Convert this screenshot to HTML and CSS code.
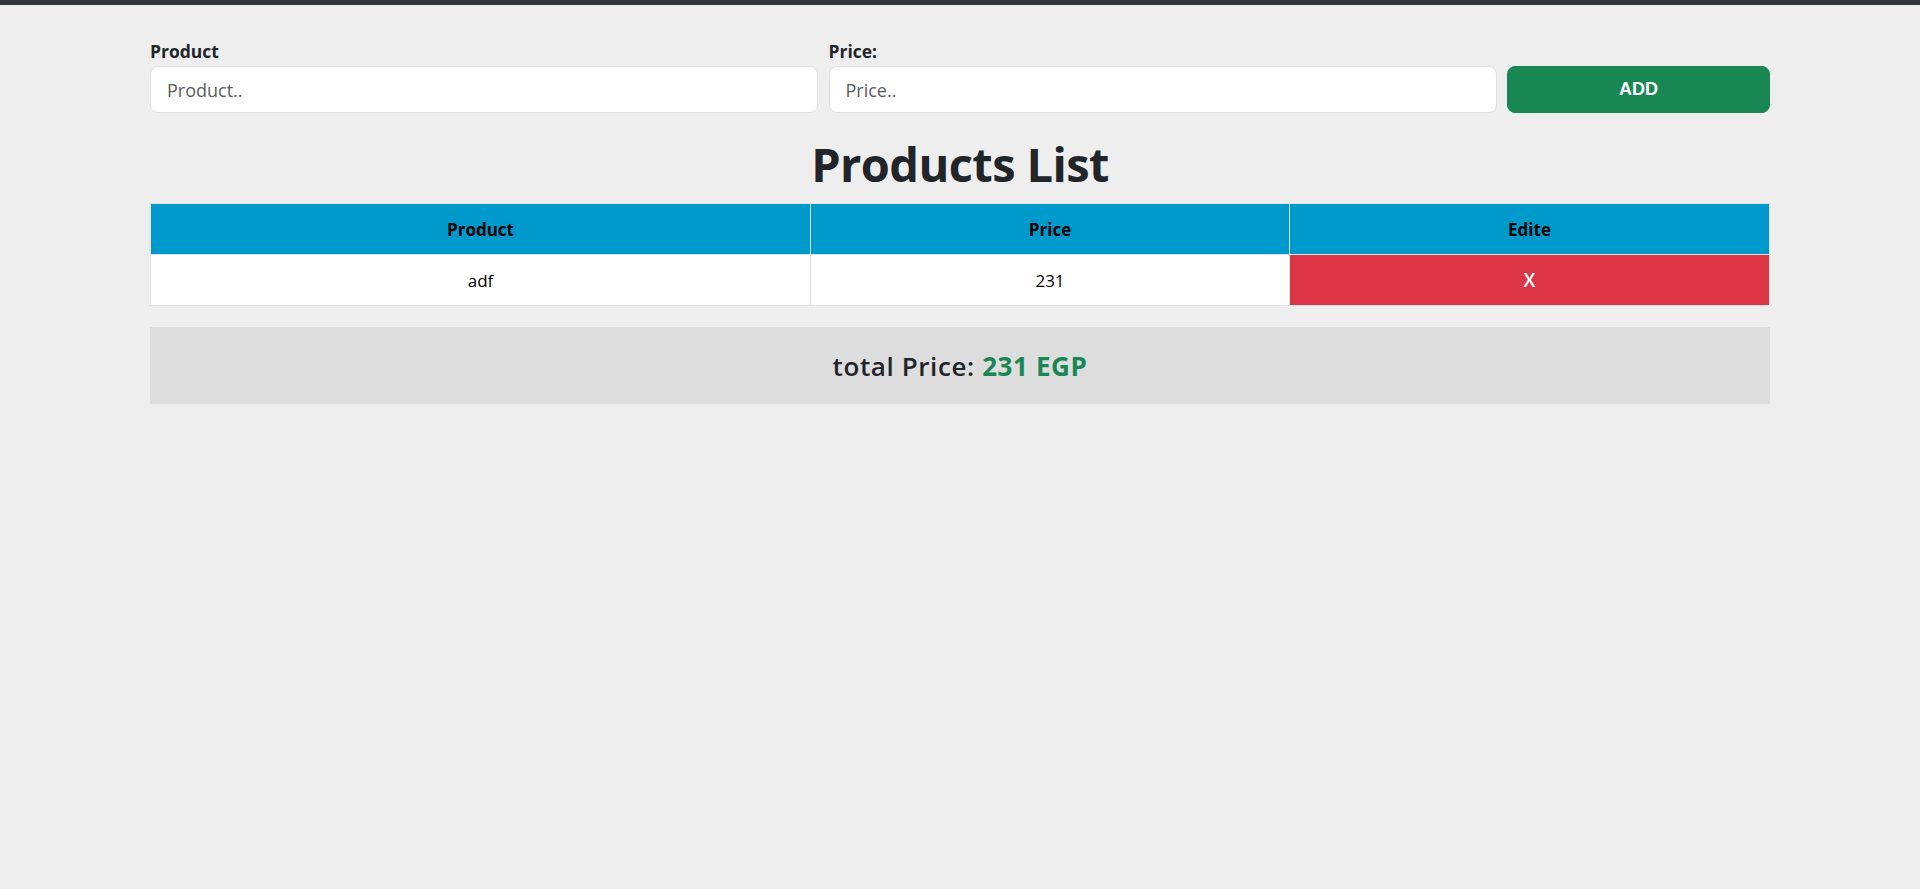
FILE: index.html
```html
<!DOCTYPE html>
<html lang="en">
<head>
<meta charset="utf-8">
<title>Products List</title>
<link rel="stylesheet" href="styles.css">
</head>
<body>
<div class="topbar"></div>
<main class="container">
  <form class="entry">
    <div class="field">
      <label class="field-label" for="product">Product</label>
      <input class="field-input" id="product" type="text" placeholder="Product..">
    </div>
    <div class="field">
      <label class="field-label" for="price">Price:</label>
      <input class="field-input" id="price" type="text" placeholder="Price..">
    </div>
    <button class="add-btn" type="button">ADD</button>
  </form>

  <h1 class="title">Products List</h1>

  <table class="products">
    <thead>
      <tr>
        <th class="col-product">Product</th>
        <th class="col-price">Price</th>
        <th class="col-edit">Edite</th>
      </tr>
    </thead>
    <tbody>
      <tr>
        <td>adf</td>
        <td>231</td>
        <td class="delete-cell">X</td>
      </tr>
    </tbody>
  </table>

  <div class="total">
    <h4 class="total-text">total Price: <span class="total-value">231 EGP</span></h4>
  </div>
</main>
</body>
</html>
```

FILE: styles.css
```css
* { box-sizing: border-box; }

html, body {
  margin: 0;
  padding: 0;
}

body {
  background: #eeeeee;
  font-family: "Open Sans", "Noto Sans", sans-serif;
  color: #212529;
  min-height: 889px;
}

.topbar {
  height: 5px;
  background: #333438;
}

.container {
  width: 1620px;
  margin: 0 auto;
  padding-top: 34px;
}

.entry {
  display: grid;
  grid-template-columns: 668px 668px 1fr;
  column-gap: 10.5px;
  align-items: end;
  margin: 0;
}

.field {
  display: flex;
  flex-direction: column;
}

.field-label {
  font-size: 17.5px;
  font-weight: 700;
  line-height: 24px;
  margin-bottom: 3px;
  color: #212529;
}

.field-input {
  height: 47px;
  border: 1px solid #dee2e6;
  border-radius: 8px;
  background: #ffffff;
  padding: 0 16px;
  font-family: "Open Sans", "Noto Sans", sans-serif;
  font-size: 18px;
  color: #212529;
  outline: none;
}

.field-input::placeholder {
  color: #595c5f;
}

.add-btn {
  height: 47px;
  border: 1px solid #198754;
  border-radius: 8px;
  background: #198754;
  color: #ffffff;
  font-family: "Liberation Sans", Arial, sans-serif;
  font-size: 18px;
  font-weight: 700;
  cursor: pointer;
}

.title {
  margin: 22px 0 10px;
  text-align: center;
  font-size: 47px;
  font-weight: 700;
  letter-spacing: -0.6px;
  line-height: 58px;
  color: #212529;
}

.products {
  width: 100%;
  border-collapse: collapse;
  border: 1px solid #dee2e6;
  font-size: 17px;
}

.products th,
.products td {
  height: 51px;
  text-align: center;
  vertical-align: middle;
  border: 1px solid #dee2e6;
  padding: 0 8px;
}

.products th {
  background: #0099cc;
  color: #000000;
  font-weight: 700;
}

.products td {
  background: #ffffff;
  color: #000000;
}

.col-product { width: 660px; }
.col-price { width: 479px; }

.products td.delete-cell {
  background: #dc3545;
  color: #ffffff;
  font-weight: 600;
  font-size: 19px;
  cursor: pointer;
}

.total {
  margin-top: 21px;
  height: 77px;
  background: #dddddd;
  display: flex;
  align-items: center;
  justify-content: center;
}

.total-text {
  margin: 0;
  font-size: 26px;
  font-weight: 600;
  letter-spacing: 0.6px;
  color: #212529;
}

.total-value {
  color: #198754;
  font-weight: 700;
}
```
